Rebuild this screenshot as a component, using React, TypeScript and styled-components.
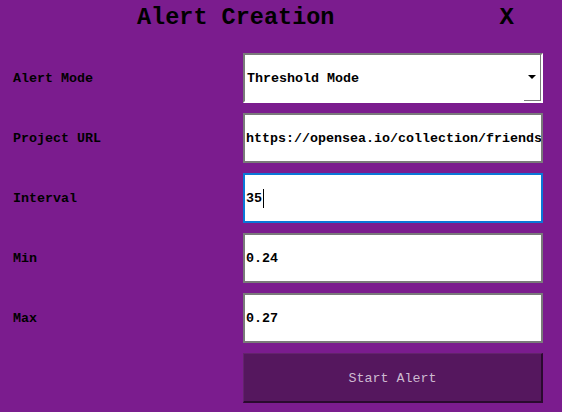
import React from "react";
import styled, { createGlobalStyle } from "styled-components";

const Global = createGlobalStyle`
  html, body {
    margin: 0;
    padding: 0;
    background: #7b1c8e;
  }
  body {
    font-family: "Liberation Mono", "Courier New", monospace;
  }
`;

const Page = styled.div`
  width: 562px;
  height: 412px;
  box-sizing: border-box;
  display: flex;
  flex-direction: column;
  background: #7b1c8e;
`;

const Header = styled.header`
  display: flex;
  align-items: center;
  height: 36px;
  padding: 0 48px 0 137px;
  margin-bottom: 17px;
`;

const Title = styled.h1`
  margin: 0;
  flex: 1;
  font-size: 23.5px;
  font-weight: bold;
  line-height: 36px;
  color: #000;
`;

const Close = styled.button`
  background: none;
  border: none;
  padding: 0;
  font-family: inherit;
  font-size: 24px;
  font-weight: bold;
  line-height: 36px;
  color: #000;
  cursor: pointer;
`;

const Form = styled.div`
  display: grid;
  grid-template-columns: 230px 300px;
  grid-auto-rows: 50px;
  row-gap: 10px;
  padding-left: 13px;
  align-items: center;
`;

const Label = styled.label`
  font-size: 13.33px;
  font-weight: bold;
  color: #000;
`;

const Field = styled.div<{ $focused?: boolean }>`
  box-sizing: border-box;
  height: 50px;
  background: #fff;
  border: 2px solid ${(p) => (p.$focused ? "#0a78d7" : "#7a7a7a")};
  display: flex;
  align-items: center;
  padding-left: 1px;
  padding-top: 1px;
  font-size: 13.33px;
  font-weight: bold;
  color: #000;
  overflow: hidden;
  white-space: nowrap;
`;

const Caret = styled.span`
  display: inline-block;
  width: 1px;
  height: 19px;
  background: #000;
  margin-left: 1px;
`;

const SelectBox = styled.div`
  box-sizing: border-box;
  height: 50px;
  background: #fff;
  display: flex;
  align-items: stretch;
  border-top: 2px solid #7a7a7a;
  border-left: 2px solid #7a7a7a;
  border-right: 2px solid #fff;
  border-bottom: 2px solid #fff;
  font-size: 13.33px;
  font-weight: bold;
  color: #000;
`;

const SelectText = styled.div`
  flex: 1;
  display: flex;
  align-items: center;
  padding-left: 2px;
  padding-top: 1px;
`;

const ArrowButton = styled.div`
  width: 16px;
  border-right: 1px solid #7a7a7a;
  border-bottom: 1px solid #7a7a7a;
  display: flex;
  align-items: center;
  justify-content: center;
`;

const Arrow = styled.span`
  width: 0;
  height: 0;
  border-left: 4px solid transparent;
  border-right: 4px solid transparent;
  border-top: 4px solid #000;
  margin-top: -2px;
`;

const StartButton = styled.button`
  grid-column: 2;
  box-sizing: border-box;
  height: 50px;
  padding-top: 2px;
  background: #55175e;
  border-top: 1px solid #63236c;
  border-left: 1px solid #63236c;
  border-right: 2px solid #2a0a2f;
  border-bottom: 2px solid #2a0a2f;
  color: #cdbad1;
  font-family: inherit;
  font-size: 13.33px;
  font-weight: normal;
  cursor: pointer;
`;

export default function App() {
  return (
    <>
      <Global />
      <Page>
        <Header>
          <Title>Alert Creation</Title>
          <Close>X</Close>
        </Header>
        <Form>
          <Label>Alert Mode</Label>
          <SelectBox>
            <SelectText>Threshold Mode</SelectText>
            <ArrowButton>
              <Arrow />
            </ArrowButton>
          </SelectBox>

          <Label>Project URL</Label>
          <Field>https://opensea.io/collection/friends</Field>

          <Label>Interval</Label>
          <Field $focused>
            35
            <Caret />
          </Field>

          <Label>Min</Label>
          <Field>0.24</Field>

          <Label>Max</Label>
          <Field>0.27</Field>

          <StartButton>Start Alert</StartButton>
        </Form>
      </Page>
    </>
  );
}
